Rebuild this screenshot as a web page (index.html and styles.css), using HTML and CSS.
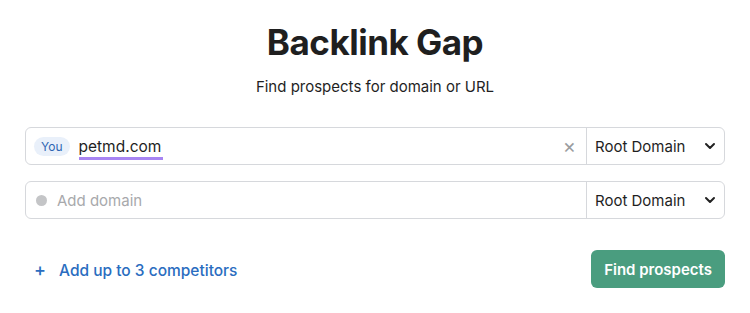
FILE: index.html
```html
<!DOCTYPE html>
<html lang="en">
<head>
    <meta charset="UTF-8">
    <title>Backlink Gap</title>
    <link rel="stylesheet" href="styles.css">
</head>
<body>
    <main class="gap">
        <h1>Backlink Gap</h1>
        <p class="subtitle">Find prospects for domain or URL</p>

        <div class="row">
            <div class="field">
                <span class="badge">You</span>
                <span class="domain">petmd.com</span>
                <span class="clear">&times;</span>
            </div>
            <div class="select">
                Root Domain
                <svg width="12" height="8" viewBox="0 0 12 8"><path d="M2 2l4 4 4-4" fill="none" stroke="#222" stroke-width="2" stroke-linecap="round" stroke-linejoin="round"/></svg>
            </div>
        </div>

        <div class="row">
            <div class="field">
                <span class="dot"></span>
                <span class="placeholder">Add domain</span>
            </div>
            <div class="select">
                Root Domain
                <svg width="12" height="8" viewBox="0 0 12 8"><path d="M2 2l4 4 4-4" fill="none" stroke="#222" stroke-width="2" stroke-linecap="round" stroke-linejoin="round"/></svg>
            </div>
        </div>

        <div class="actions">
            <a href="#" class="add"><span class="plus">+</span>Add up to 3 competitors</a>
            <button class="find">Find prospects</button>
        </div>
    </main>
</body>
</html>
```

FILE: styles.css
```css
* {
    margin: 0;
    padding: 0;
    box-sizing: border-box;
    font-family: Inter, "Noto Sans", sans-serif;
}

body {
    background: #fff;
    color: #1f1f1f;
}

.gap {
    padding: 20px 25px 0 25px;
}

h1 {
    text-align: center;
    font-size: 35px;
    font-weight: 700;
    letter-spacing: -0.5px;
    line-height: 44px;
}

.subtitle {
    text-align: center;
    font-size: 15px;
    margin-top: 13px;
    line-height: 20px;
}

.row {
    display: flex;
    height: 38px;
    border: 1px solid #d6d8dc;
    border-radius: 6px;
    margin-top: 30px;
}

.row + .row {
    margin-top: 16px;
}

.field {
    flex: 1;
    display: flex;
    align-items: center;
    padding: 0 10px 0 8px;
    border-right: 1px solid #d6d8dc;
}

.badge {
    background: #e9f0fa;
    color: #2f66b3;
    font-size: 12px;
    padding: 2px 7px;
    border-radius: 10px;
    line-height: 15px;
}

.domain {
    margin-left: 9px;
    font-size: 15.5px;
    color: #1f1f1f;
    border-bottom: 3px solid #a784f2;
    line-height: 20px;
    padding-top: 5px;
    padding-right: 2px;
}

.clear {
    margin-left: auto;
    color: #9a9ca0;
    font-size: 20px;
    line-height: 20px;
}

.dot {
    width: 11px;
    height: 11px;
    border-radius: 50%;
    background: #c4c5c7;
    margin-left: 2px;
}

.placeholder {
    margin-left: 10px;
    font-size: 15px;
    color: #a8a9ac;
}

.select {
    width: 137px;
    display: flex;
    align-items: center;
    justify-content: space-between;
    padding: 0 8px 0 8px;
    font-size: 15px;
    color: #1f1f1f;
}

.actions {
    display: flex;
    justify-content: space-between;
    align-items: center;
    margin-top: 31px;
}

.add {
    color: #2a6dc0;
    text-decoration: none;
    font-size: 15.5px;
    font-weight: 500;
    padding-left: 9px;
}

.plus {
    font-size: 18px;
    margin-right: 13px;
}

.find {
    background: #4a9d7f;
    color: #fff;
    border: none;
    border-radius: 6px;
    font-size: 15px;
    font-weight: 600;
    height: 38px;
    padding: 0 13px;
}
```
